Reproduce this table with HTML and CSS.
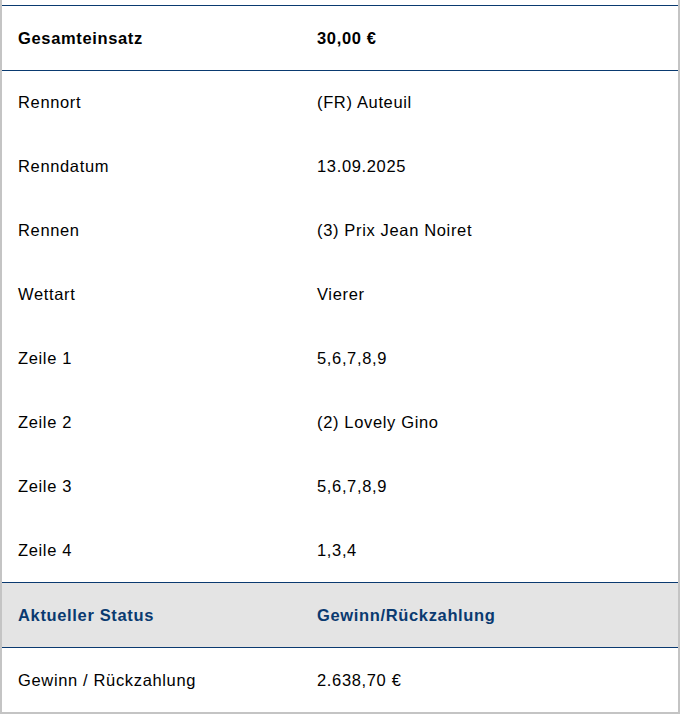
FILE: index.html
```html
<!DOCTYPE html>
<html lang="de">
<head>
<meta charset="utf-8">
<link rel="stylesheet" href="styles.css">
</head>
<body>
<div class="frame">
  <table class="bet">
    <tbody>
      <tr class="total"><td>Gesamteinsatz</td><td>30,00 €</td></tr>
      <tr><td>Rennort</td><td>(FR) Auteuil</td></tr>
      <tr><td>Renndatum</td><td>13.09.2025</td></tr>
      <tr><td>Rennen</td><td>(3) Prix Jean Noiret</td></tr>
      <tr><td>Wettart</td><td>Vierer</td></tr>
      <tr><td>Zeile 1</td><td>5,6,7,8,9</td></tr>
      <tr><td>Zeile 2</td><td>(2) Lovely Gino</td></tr>
      <tr><td>Zeile 3</td><td>5,6,7,8,9</td></tr>
      <tr class="last-detail"><td>Zeile 4</td><td>1,3,4</td></tr>
      <tr class="status"><td>Aktueller Status</td><td>Gewinn/Rückzahlung</td></tr>
      <tr class="payout"><td>Gewinn / Rückzahlung</td><td>2.638,70 €</td></tr>
    </tbody>
  </table>
</div>
</body>
</html>
```
FILE: styles.css
```css
html, body {
  margin: 0;
  padding: 0;
  background: #ffffff;
}
body {
  font-family: "Liberation Sans", Arial, sans-serif;
  color: #000000;
}
.frame {
  box-sizing: border-box;
  width: 680px;
  height: 714px;
  padding-top: 5px;
  border-left: 2px solid #c4c4c4;
  border-right: 2px solid #c4c4c4;
  border-bottom: 2px solid #c4c4c4;
  overflow: hidden;
}
.bet {
  width: 100%;
  border-collapse: collapse;
  border-top: 1px solid #0a3a70;
}
.bet td {
  height: 64px;
  padding: 0 16px;
  font-size: 16.5px;
  letter-spacing: 0.65px;
  vertical-align: middle;
  box-sizing: border-box;
}
.bet td:first-child {
  width: 299px;
}
.total td {
  height: 65px;
  padding-top: 1px;
  font-weight: bold;
  border-bottom: 1px solid #0a3a70;
}
.last-detail td {
  border-bottom: 1px solid #0a3a70;
}
.status td {
  height: 65px;
  padding-top: 1px;
  background: #e4e4e4;
  color: #0a3a70;
  font-weight: bold;
  border-bottom: 1px solid #0a3a70;
}
.payout td {
  padding-top: 2px;
}
```
